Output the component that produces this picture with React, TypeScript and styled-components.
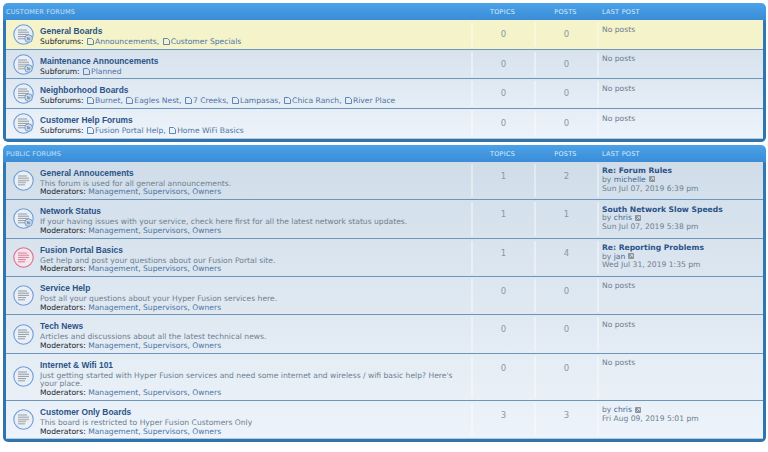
import React from 'react';
import styled, { createGlobalStyle } from 'styled-components';

const GlobalStyle = createGlobalStyle`
  html, body { margin: 0; padding: 0; background: #fff; }
  body { font-family: "DejaVu Sans", Verdana, sans-serif; font-size: 7.6px; }
`;

const Page = styled.div`
  width: 768px;
  height: 452px;
  overflow: hidden;
  padding: 3px 2px 0 3px;
  box-sizing: border-box;
  display: flex;
  flex-direction: column;
  gap: 3px;
`;

const Panel = styled.section`
  border-radius: 5px;
  padding: 0 3px 3px;
  background: linear-gradient(to bottom, #4ba2e8 0, #3a8cd6 17px, #2f78b4 18px, #2f74ac 100%);
`;

const HeaderRow = styled.div`
  display: grid;
  grid-template-columns: 465px 63px 63px 1fr;
  height: 17px;
  padding-top: 1px;
  box-sizing: border-box;
  align-items: center;
  color: #d9ecfb;
  font-size: 6.5px;
  letter-spacing: 0.25px;
  text-transform: uppercase;
`;

const HeaderTitle = styled.span`
  letter-spacing: 0.15px;
  color: #c8e2f8;
`;

const HeaderCol = styled.span`
  text-align: center;
`;

const HeaderLast = styled.span`
  padding-left: 5px;
`;

const List = styled.div`
  background: linear-gradient(to bottom, #d0dde9 0%, #edf3fa 100%);
  border-bottom: 1px solid #b7c8d8;
`;

const Row = styled.div<{ $highlight?: boolean }>`
  display: grid;
  grid-template-columns: 465px 63px 63px 1fr;
  border-bottom: 1px solid #6c96bb;
  background: ${(p) => (p.$highlight ? '#f4f3c9' : 'transparent')};
  &:last-child { border-bottom: none; }
`;

const Main = styled.div`
  display: flex;
  align-items: center;
  min-width: 0;
`;

const IconSlot = styled.div`
  flex: none;
  width: 34px;
  display: flex;
  justify-content: center;
`;

const Body = styled.div`
  padding: 5px 0 2px;
  flex: 1;
  min-width: 0;
  line-height: 8.7px;
  align-self: flex-start;
`;

const Title = styled.div`
  font-family: "Liberation Sans", Arial, sans-serif;
  font-weight: 700;
  font-size: 8.4px;
  line-height: 13px;
  color: #2b5388;
`;

const Desc = styled.div`
  color: #6e7f90;
  padding-right: 10px;
`;

const Line = styled.div`
  color: #2a2f36;
  white-space: nowrap;
  height: 8.7px;
`;

const Label = styled.span`
  color: #22262c;
`;

const LinkText = styled.span`
  color: #4d76a3;
`;

const SubLink = styled.span`
  color: #4d76a3;
`;

const DocSvg = styled.svg`
  width: 7px;
  height: 7px;
  margin: 0 1px 0 1px;
  vertical-align: -1px;
`;

const CountCell = styled.div`
  border-left: 2px solid rgba(255, 255, 255, 0.4);
  margin: 2px 0;
  padding-top: 6px;
  text-align: center;
  color: #8a98a6;
  font-size: 8.5px;
  line-height: 12px;
`;

const LastCell = styled.div`
  border-left: 2px solid rgba(255, 255, 255, 0.4);
  margin: 2px 0;
  padding: 3.5px 0 0 3px;
  color: #6e7f90;
  line-height: 8.7px;
`;

const LastTitle = styled.div`
  font-weight: 700;
  color: #2b5388;
`;

const Author = styled.span`
  color: #3f6898;
`;

const MiniIcon = styled.svg`
  width: 6px;
  height: 6px;
  margin-left: 3px;
  vertical-align: -0.5px;
`;

const DocIcon = () => (
  <DocSvg viewBox="0 0 7 7">
    <path d="M.5.5h4l2 1.8v4.2h-6z" fill="none" stroke="#5b86b5" strokeWidth="1" />
  </DocSvg>
);

const LatestIcon = () => (
  <MiniIcon viewBox="0 0 6 6">
    <rect width="6" height="6" rx="1" fill="#8d959c" />
    <path d="M1.5 4.5 4 2M2.5 1.8h2v2" stroke="#e4e8ec" strokeWidth=".8" fill="none" />
  </MiniIcon>
);

type IconKind = 'sub' | 'plain' | 'grey' | 'red' | 'greysub';

const ForumIcon = ({ kind }: { kind: IconKind }) => {
  const red = kind === 'red';
  const faded = kind === 'grey' || kind === 'greysub';
  const ring = red ? '#dc6f8e' : '#6f9dd6';
  const line = red ? '#dc6f8e' : faded ? '#b4b9bd' : '#8b9197';
  const w = faded ? 1.5 : 0.9;
  return (
    <svg width="21" height="21" viewBox="0 0 21 21">
      <circle cx="10.5" cy="10.5" r="9.7" fill={red ? '#f3e6ec' : '#e9eff6'} stroke={ring} strokeWidth="1.1" />
      <path d="M5 6h9M5 8.2h11M5 10.4h11M5 12.6h8M5 14.8h7" stroke={line} strokeWidth={w} fill="none" />
      {(kind === 'sub' || kind === 'greysub') && (
        <g>
          <circle cx="15.6" cy="14.6" r="3.8" fill="#cfdcea" stroke="#6f9dd6" />
          <path d="M13.9 13.1h1.3l.5.6h1.6v2.5h-3.4z" fill="#8aa0ba" />
        </g>
      )}
    </svg>
  );
};

interface Sub { name: string }
interface Last { title?: string; by: string; date: string }
interface Forum {
  title: string;
  icon: IconKind;
  highlight?: boolean;
  subLabel?: string;
  subs?: Sub[];
  desc?: string;
  topics: number;
  posts: number;
  last?: Last;
}

const mods = 'Management, Supervisors, Owners';
const s = (...names: string[]) => names.map((name) => ({ name }));

const customer: Forum[] = [
  { title: 'General Boards', icon: 'sub', highlight: true, subLabel: 'Subforums:', subs: s('Announcements', 'Customer Specials'), topics: 0, posts: 0 },
  { title: 'Maintenance Announcements', icon: 'greysub', subLabel: 'Subforum:', subs: s('Planned'), topics: 0, posts: 0 },
  { title: 'Neighborhood Boards', icon: 'sub', subLabel: 'Subforums:', subs: s('Burnet', 'Eagles Nest', '7 Creeks', 'Lampasas', 'Chica Ranch', 'River Place'), topics: 0, posts: 0 },
  { title: 'Customer Help Forums', icon: 'sub', subLabel: 'Subforums:', subs: s('Fusion Portal Help', 'Home WiFi Basics'), topics: 0, posts: 0 },
];

const publicForums: Forum[] = [
  { title: 'General Annoucements', icon: 'grey', desc: 'This forum is used for all general announcements.', topics: 1, posts: 2, last: { title: 'Re: Forum Rules', by: 'michelle', date: 'Sun Jul 07, 2019 6:39 pm' } },
  { title: 'Network Status', icon: 'sub', desc: 'If your having issues with your service, check here first for all the latest network status updates.', topics: 1, posts: 1, last: { title: 'South Network Slow Speeds', by: 'chris', date: 'Sun Jul 07, 2019 5:38 pm' } },
  { title: 'Fusion Portal Basics', icon: 'red', desc: 'Get help and post your questions about our Fusion Portal site.', topics: 1, posts: 4, last: { title: 'Re: Reporting Problems', by: 'jan', date: 'Wed Jul 31, 2019 1:35 pm' } },
  { title: 'Service Help', icon: 'plain', desc: 'Post all your questions about your Hyper Fusion services here.', topics: 0, posts: 0 },
  { title: 'Tech News', icon: 'plain', desc: 'Articles and discussions about all the latest technical news.', topics: 0, posts: 0 },
  { title: 'Internet & Wifi 101', icon: 'plain', desc: "Just getting started with Hyper Fusion services and need some internet and wireless / wifi basic help? Here's your place.", topics: 0, posts: 0 },
  { title: 'Customer Only Boards', icon: 'grey', desc: 'This board is restricted to Hyper Fusion Customers Only', topics: 3, posts: 3, last: { by: 'chris', date: 'Fri Aug 09, 2019 5:01 pm' } },
];

const ForumRow = ({ forum }: { forum: Forum }) => (
  <Row $highlight={forum.highlight}>
    <Main>
      <IconSlot>
        <ForumIcon kind={forum.icon} />
      </IconSlot>
      <Body>
        <Title>{forum.title}</Title>
        {forum.desc && <Desc>{forum.desc}</Desc>}
        {forum.subs ? (
          <Line>
            <Label>{forum.subLabel}</Label>{' '}
            {forum.subs.map((sub, i) => (
              <React.Fragment key={sub.name}>
                <SubLink>
                  <DocIcon />
                  {sub.name}
                </SubLink>
                {i < forum.subs!.length - 1 && <LinkText>, </LinkText>}
              </React.Fragment>
            ))}
          </Line>
        ) : (
          <Line>
            <Label>Moderators:</Label> <LinkText>{mods}</LinkText>
          </Line>
        )}
      </Body>
    </Main>
    <CountCell>{forum.topics}</CountCell>
    <CountCell>{forum.posts}</CountCell>
    <LastCell>
      {forum.last ? (
        <>
          {forum.last.title && <LastTitle>{forum.last.title}</LastTitle>}
          <div>
            by <Author>{forum.last.by}</Author>
            <LatestIcon />
          </div>
          <div>{forum.last.date}</div>
        </>
      ) : (
        'No posts'
      )}
    </LastCell>
  </Row>
);

const ForumPanel = ({ title, forums }: { title: string; forums: Forum[] }) => (
  <Panel>
    <HeaderRow>
      <HeaderTitle>{title}</HeaderTitle>
      <HeaderCol>Topics</HeaderCol>
      <HeaderCol>Posts</HeaderCol>
      <HeaderLast>Last post</HeaderLast>
    </HeaderRow>
    <List>
      {forums.map((f) => (
        <ForumRow key={f.title} forum={f} />
      ))}
    </List>
  </Panel>
);

export default function App() {
  return (
    <>
      <GlobalStyle />
      <Page>
        <ForumPanel title="Customer Forums" forums={customer} />
        <ForumPanel title="Public Forums" forums={publicForums} />
      </Page>
    </>
  );
}
